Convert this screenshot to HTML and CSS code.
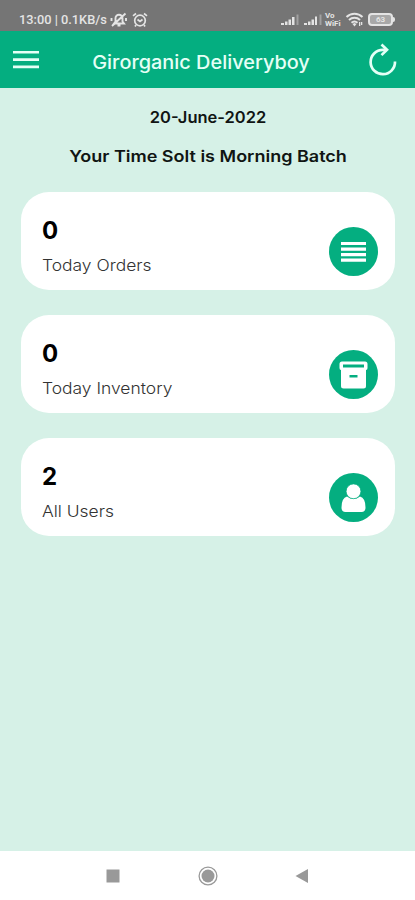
FILE: index.html
```html
<!DOCTYPE html>
<html lang="en">
<head>
<meta charset="utf-8">
<title>Girorganic Deliveryboy</title>
<link rel="stylesheet" href="styles.css">
</head>
<body>
<div class="status">
  <span class="clock">13:00 | 0.1KB/s</span>
  <svg class="mute" width="18" height="16" viewBox="0 0 18 16" fill="none" stroke="currentColor" stroke-width="1.900"><path d="M4 11.500h10l-1.500-2V6.200a3.500 3.500 0 0 0-7 0v3.300zM7.500 13.500h3M2 14 15.500 1.500M1.500 6v3M16 6v3"/></svg>
  <svg class="alarm" width="16" height="16" viewBox="0 0 16 16" fill="none" stroke="currentColor" stroke-width="1.700"><circle cx="8" cy="8.500" r="5.300"/><path d="M1 3.800 4 1.500M15 3.800 12 1.500M5.500 7.500 8 9.500l2.500-2M4 13l-1 1.500M12 13l1 1.500"/></svg>
  <div class="system">
    <svg width="19" height="13" viewBox="0 0 19 13" fill="currentColor"><path d="M0 10h3v2H0zM4 8.500h2.500V12H4zM7.500 6.500H10V12H7.500zM11 4h2.500v8H11z"/><path opacity=".4" d="M15.500 1.500h2V12h-2z"/></svg>
    <svg class="signal-two" width="19" height="13" viewBox="0 0 19 13" fill="currentColor"><path d="M0 10h3v2H0zM4 8.500h2.500V12H4zM7.500 6.500H10V12H7.500zM11 3.500h2V12h-2z"/><path opacity=".4" d="M15.500 1.500h2V12h-2z"/></svg>
    <span class="vowifi"><span>Vo</span><span>WiFi</span></span>
    <svg class="wifi" width="20" height="15" viewBox="0 0 20 15" fill="none" stroke="currentColor" stroke-width="2"><path d="M1.500 5a11.500 11.500 0 0 1 16 0M4 8a8 8 0 0 1 11 0M6.500 10.800a4.500 4.500 0 0 1 6 0"/><path fill="currentColor" stroke="none" d="m7.500 12 2-1 2 1-2 2.500zM14 10h1.300v4H14zM16 10h1.300v3H16z"/></svg>
    <span class="battery">63</span>
    <span class="tip"></span>
  </div>
</div>
<header class="bar">
  <svg width="28" height="20" viewBox="0 0 28 20" fill="currentColor"><path d="M1 1h26v2.600H1zM1 8.300h26v2.600H1zM1 15.600h26v2.600H1z"/></svg>
  <h1>Girorganic Deliveryboy</h1>
  <svg width="30" height="34" viewBox="0 0 30 34" fill="none" stroke="currentColor" stroke-width="2.700"><path d="M27 18.500A12.200 12.200 0 1 1 14.800 6.800H19"/><path d="m13.500 1.500 5.500 5.300-5.500 5.300"/></svg>
</header>
<main>
  <p class="date">20-June-2022</p>
  <p class="slot">Your Time Solt is Morning Batch</p>
  <section class="card">
    <div><strong>0</strong><span>Today Orders</span></div>
    <svg class="badge" viewBox="0 0 49 49"><circle cx="24.500" cy="24.500" r="24.500" fill="#04ae80"/><path fill="#fff" d="M12 15h25v3H12zM12 20.500h25v3.200H12zM12 26h25v3.200H12zM12 31.500h25v3.300H12z"/></svg>
  </section>
  <section class="card">
    <div><strong>0</strong><span>Today Inventory</span></div>
    <svg class="badge" viewBox="0 0 49 49"><circle cx="24.500" cy="24.500" r="24.500" fill="#04ae80"/><path fill="#fff" fill-rule="evenodd" d="M13 11.500h23q2.500 0 2.500 2.500v4q0 2-1.500 2v16q0 2.500-2.500 2.500h-20q-2.500 0-2.500-2.500V20q-1.500 0-1.500-2v-4q0-2.500 2.500-2.500zM14 14.500v3h21v-3zM20.500 25v2.500h8V25z"/></svg>
  </section>
  <section class="card">
    <div><strong>2</strong><span>All Users</span></div>
    <svg class="badge" viewBox="0 0 49 49"><circle cx="24.500" cy="24.500" r="24.500" fill="#04ae80"/><path fill="#fff" d="M18 23.500q6.500 5 13 0 5.500 1.500 5.500 11 0 4.500-4 4.500h-16q-4 0-4-4.500 0-9.500 5.500-11z"/><circle cx="24.500" cy="18.300" r="7.400" fill="#fff" stroke="#04ae80" stroke-width=".7"/></svg>
  </section>
</main>
<nav>
  <svg width="14" height="14" viewBox="0 0 14 14"><path fill="#999" d="M.5.500h13v13H.5z"/></svg>
  <svg width="20" height="20" viewBox="0 0 20 20"><circle cx="10" cy="10" r="8.900" fill="none" stroke="#999" stroke-width="1.300"/><circle cx="10" cy="10" r="6.500" fill="#999"/></svg>
  <svg width="14" height="16" viewBox="0 0 14 16"><path fill="#999" d="M.5 8 13 1v14z"/></svg>
</nav>
</body>
</html>
```
FILE: styles.css
```css
* { box-sizing: border-box; }
body { margin: 0; width: 415px; height: 900px; display: flex; flex-direction: column; background: #d6f1e7; font-family: Inter, sans-serif; overflow: hidden; }
svg { display: block; flex: none; }
h1, p { margin: 0; white-space: nowrap; }
.status { height: 31px; flex: none; display: flex; align-items: center; padding: 8px 20px 0 19px; background: #757575; color: #e4e4e4; }
.clock { width: 91px; font: 500 12.8px/16px Roboto, sans-serif; white-space: nowrap; }
.alarm { margin-left: 4px; }
.system { display: flex; align-items: center; margin-left: auto; }
.signal-two { margin-left: 4px; }
.vowifi { display: flex; flex-direction: column; width: 18px; margin-left: 2px; font: 700 8px/8px Roboto, sans-serif; }
.vowifi span { height: 8px; }
.wifi { margin-left: 2px; }
.battery { width: 25px; height: 13px; margin-left: 3px; border: 2px solid; border-radius: 4px; background: #a8a8a8; font: 700 8px/9px Roboto, sans-serif; text-align: center; }
.tip { width: 2px; height: 5px; border-radius: 0 2px 2px 0; background: currentColor; }
.bar { height: 57px; flex: none; display: flex; align-items: center; justify-content: space-between; padding: 1px 17px 0 12px; background: #04ae80; color: #e4fff6; }
.bar h1 { padding: 3px 5px 0 0; font-size: 18.5px; font-weight: 500; line-height: 24px; transform: scaleX(1.075); }
main { flex: 1; padding: 18px 20px 0 21px; color: #101513; }
.date, .slot { text-align: center; font-weight: 600; font-size: 16px; line-height: 22px; }
.date { transform: scaleX(1.03); }
.slot { margin: 17px 0 25px; transform: scaleX(1.125); }
.card { height: 98px; margin-bottom: 25px; display: flex; justify-content: space-between; padding: 25px 17px 0 21px; border-radius: 28px; background: #fff; }
.card strong { display: block; font-size: 24px; line-height: 28px; color: #000; }
.card span { display: block; margin-top: 11px; font-size: 15.5px; font-weight: 300; line-height: 20px; color: #333; transform: scaleX(1.125); transform-origin: left; }
.badge { width: 49px; height: 49px; margin-top: 10px; }
nav { height: 49px; flex: none; display: flex; justify-content: space-between; align-items: center; padding: 0 106px; background: #fff; }
```
